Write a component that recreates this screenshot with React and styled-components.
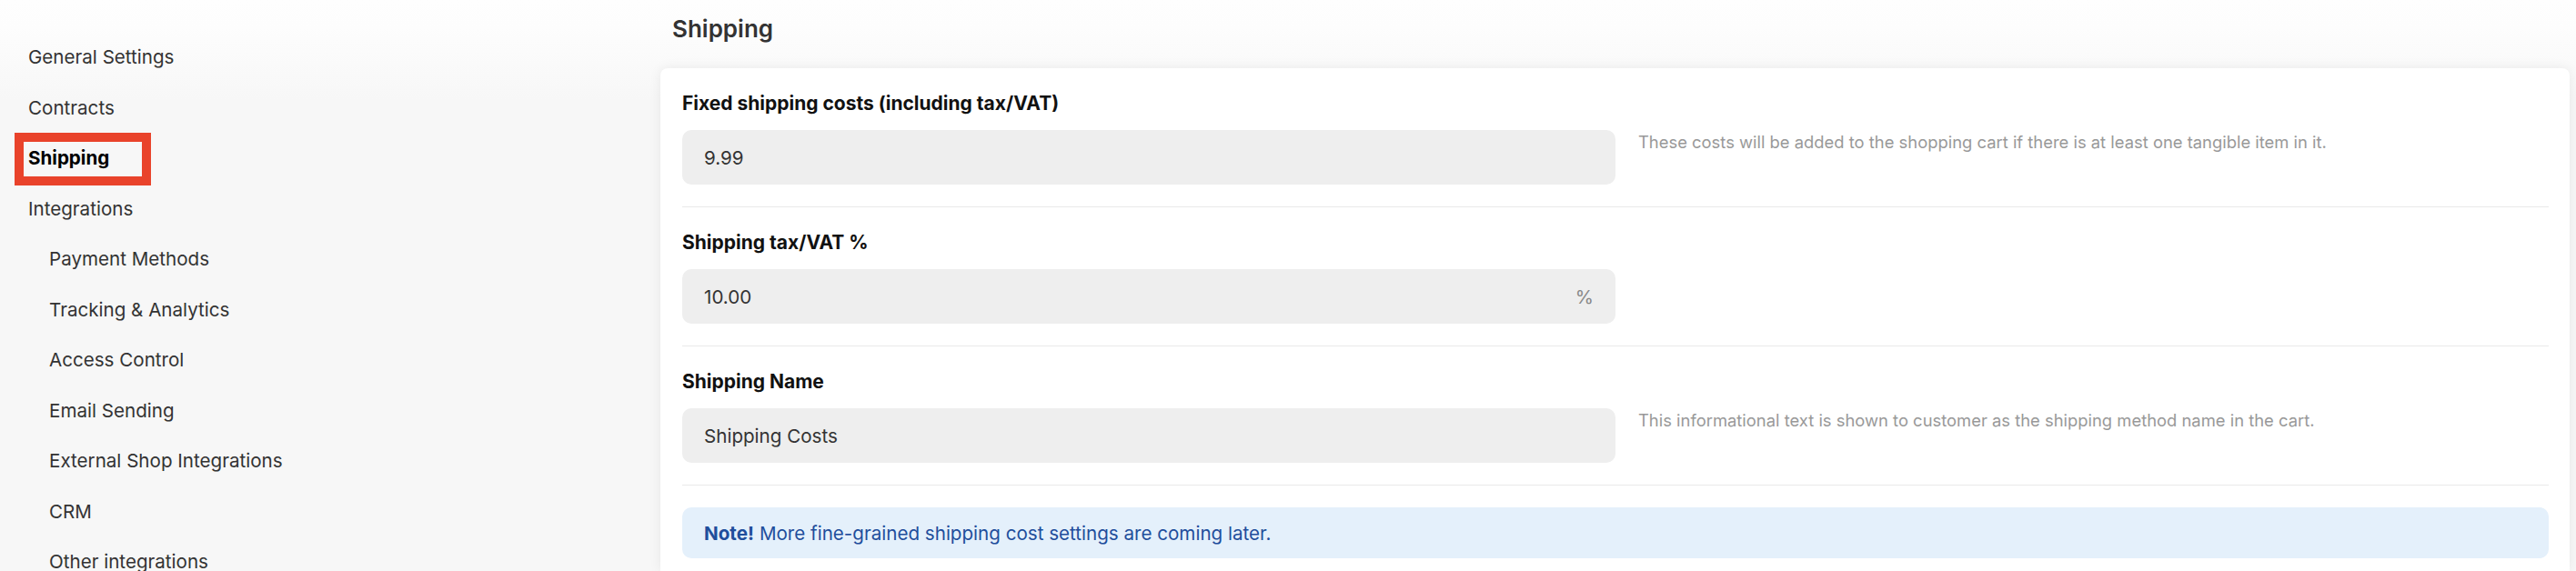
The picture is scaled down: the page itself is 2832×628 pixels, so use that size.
import React from "react";
import styled, { createGlobalStyle } from "styled-components";

const GlobalStyle = createGlobalStyle`
  html, body {
    margin: 0;
    padding: 0;
  }
  body {
    font-family: Inter, "Noto Sans", sans-serif;
    background: linear-gradient(#fefefe 0, #fdfdfd 30px, #f7f7f7 110px);
    overflow: hidden;
  }
`;

const Layout = styled.div`
  display: flex;
  height: 628px;
  overflow: hidden;
`;

const Sidebar = styled.nav`
  width: 700px;
  flex-shrink: 0;
  padding-top: 35px;
`;

const NavList = styled.ul`
  list-style: none;
  margin: 0;
  padding: 0 0 0 31px;
`;

const NavItem = styled.li`
  position: relative;
  height: 55.5px;
  line-height: 55.5px;
  padding-left: ${({ sub }) => (sub ? "23px" : "0")};
  font-size: 20.6px;
  font-weight: ${({ active }) => (active ? 700 : 400)};
  color: ${({ active }) => (active ? "#000" : "#333")};
  white-space: nowrap;

  ${({ active }) =>
    active &&
    `
    &::before {
      content: "";
      position: absolute;
      left: -15px;
      top: 0;
      width: 150px;
      height: 58px;
      border: 10px solid #e9432b;
      box-sizing: border-box;
    }
  `}
`;

const Main = styled.main`
  flex: 1;
  display: flex;
  flex-direction: column;
  padding: 16px 7px 0 26px;
  min-width: 0;
`;

const Title = styled.h1`
  margin: 0 0 27px 13px;
  font-size: 26px;
  line-height: 32px;
  font-weight: 600;
  color: #333;
`;

const Card = styled.section`
  flex: 1;
  background: #fff;
  border-radius: 8px 8px 0 0;
  box-shadow: 0 0 14px rgba(0, 0, 0, 0.07);
  padding: 0 23px 0 24px;
`;

const Section = styled.div`
  padding: 27px 0 24px;
  border-bottom: 1px solid #e9e9e9;
`;

const Label = styled.div`
  margin-bottom: 17px;
  font-size: 21px;
  line-height: 24px;
  font-weight: 700;
  color: #111;
`;

const Row = styled.div`
  display: grid;
  grid-template-columns: 1026px 1fr;
  column-gap: 25px;
  align-items: start;
`;

const Field = styled.div`
  height: 60px;
  box-sizing: border-box;
  display: flex;
  align-items: center;
  justify-content: space-between;
  padding: 0 24px;
  border-radius: 10px;
  background: #eeeeee;
  font-size: 20.6px;
  color: #333;
`;

const Unit = styled.span`
  color: #888;
`;

const Hint = styled.p`
  margin: 0;
  padding-top: 1px;
  font-size: 18.4px;
  line-height: 24px;
  color: #999;
`;

const Alert = styled.div`
  margin-top: 24px;
  height: 56px;
  display: flex;
  align-items: center;
  padding: 0 24px;
  border-radius: 10px;
  background: #e4f0fb;
  font-size: 20.6px;
  color: #1f4e9c;

  strong {
    font-weight: 700;
    margin-right: 6px;
  }
`;

const navItems = [
  { label: "General Settings" },
  { label: "Contracts" },
  { label: "Shipping", active: true },
  { label: "Integrations" },
  { label: "Payment Methods", sub: true },
  { label: "Tracking & Analytics", sub: true },
  { label: "Access Control", sub: true },
  { label: "Email Sending", sub: true },
  { label: "External Shop Integrations", sub: true },
  { label: "CRM", sub: true },
  { label: "Other integrations", sub: true },
];

const fields = [
  {
    label: "Fixed shipping costs (including tax/VAT)",
    value: "9.99",
    hint: "These costs will be added to the shopping cart if there is at least one tangible item in it.",
  },
  {
    label: "Shipping tax/VAT %",
    value: "10.00",
    unit: "%",
  },
  {
    label: "Shipping Name",
    value: "Shipping Costs",
    hint: "This informational text is shown to customer as the shipping method name in the cart.",
  },
];

export default function App() {
  return (
    <>
      <GlobalStyle />
      <Layout>
        <Sidebar>
          <NavList>
            {navItems.map((item) => (
              <NavItem key={item.label} sub={item.sub} active={item.active}>
                {item.label}
              </NavItem>
            ))}
          </NavList>
        </Sidebar>
        <Main>
          <Title>Shipping</Title>
          <Card>
            {fields.map((field) => (
              <Section key={field.label}>
                <Label>{field.label}</Label>
                <Row>
                  <Field>
                    <span>{field.value}</span>
                    {field.unit && <Unit>{field.unit}</Unit>}
                  </Field>
                  {field.hint && <Hint>{field.hint}</Hint>}
                </Row>
              </Section>
            ))}
            <Alert>
              <strong>Note!</strong>
              More fine-grained shipping cost settings are coming later.
            </Alert>
          </Card>
        </Main>
      </Layout>
    </>
  );
}
